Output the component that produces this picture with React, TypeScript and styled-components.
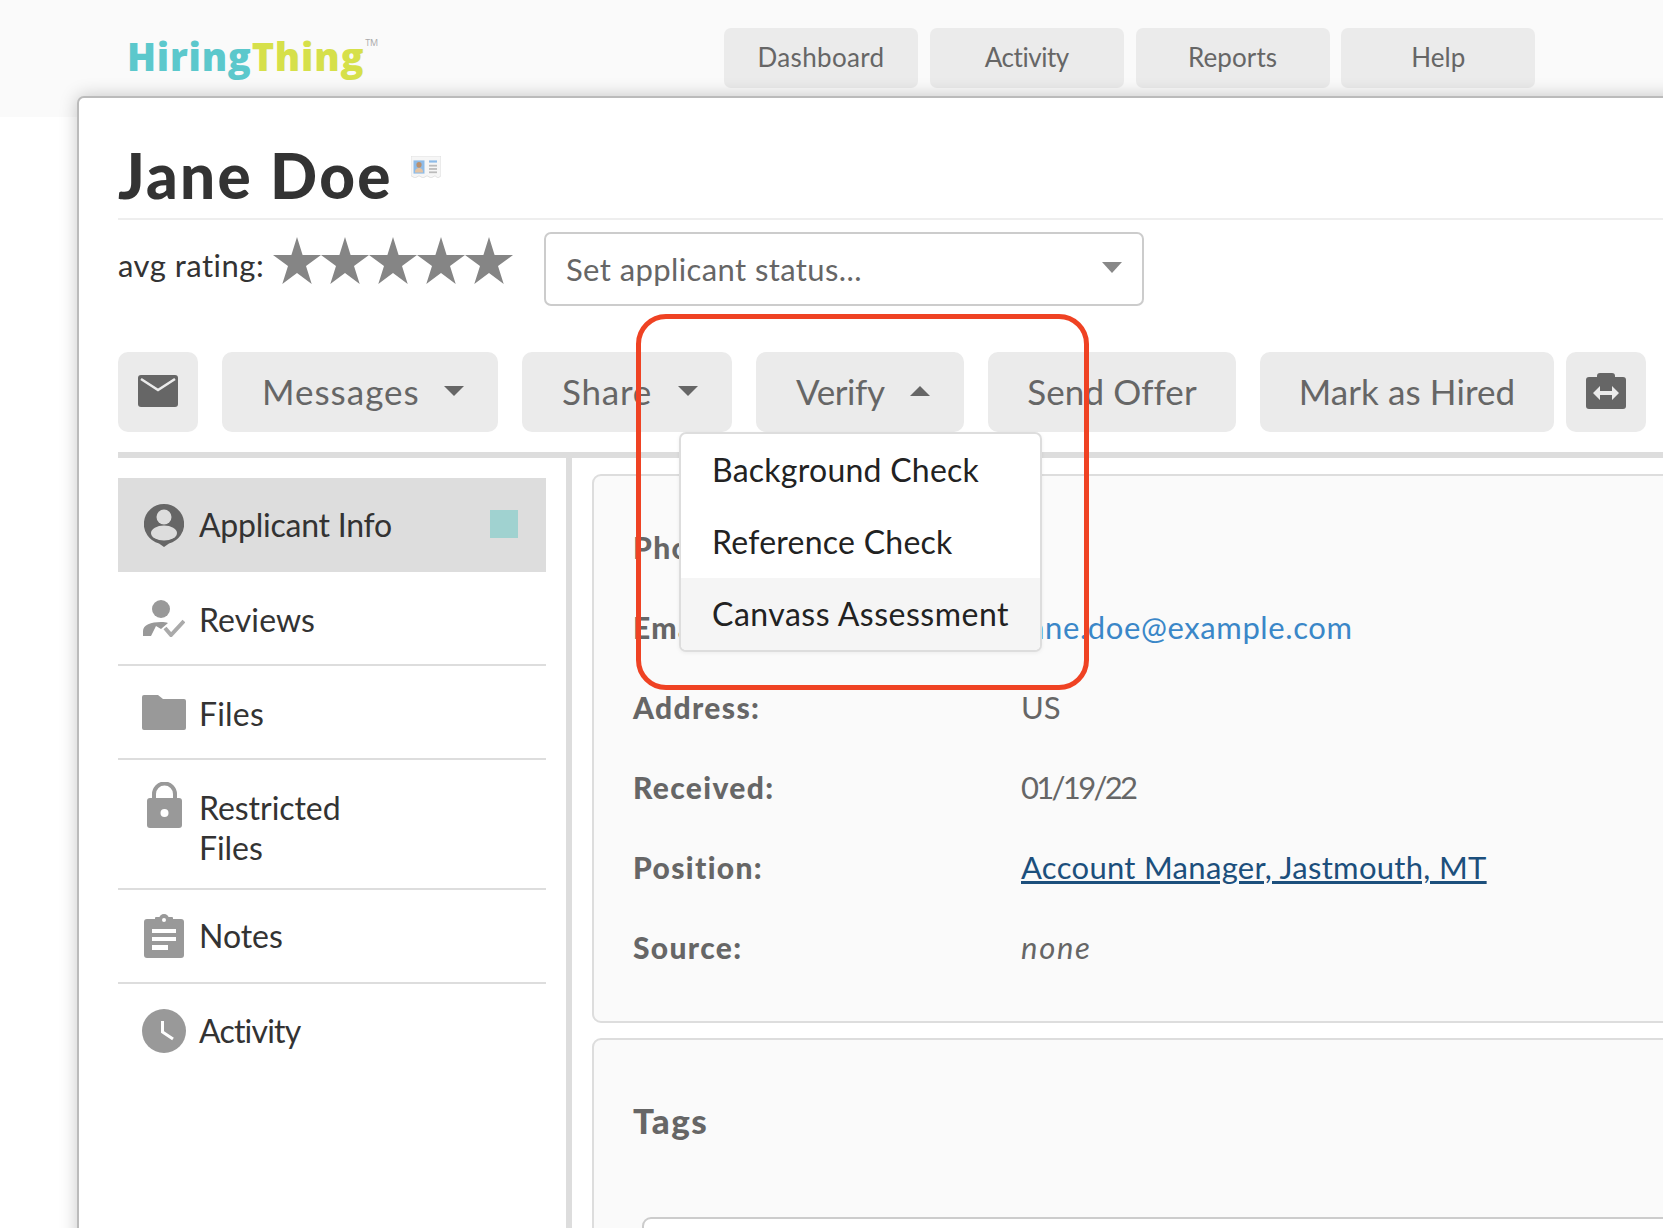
import React from "react";
import styled, { createGlobalStyle } from "styled-components";

const Global = createGlobalStyle`
  html, body { margin: 0; padding: 0; background: #fff; }
  * { box-sizing: border-box; }
  body { font-family: "Lato", "Liberation Sans", sans-serif; color: #333; }
`;

const Page = styled.div`
  position: relative;
  width: 1663px;
  height: 1228px;
  overflow: hidden;
  background: #fff;
`;

const Header = styled.header`
  display: flex;
  align-items: flex-start;
  height: 117px;
  background: #fafafa;
  padding: 28px 0 0 127px;
`;

const Logo = styled.div`
  display: flex;
  width: 597px;
  height: 60px;
  align-items: flex-start;
  font-family: "Open Sans", "Lato", sans-serif;
  font-size: 38px;
  line-height: 56px;
  font-weight: 800;
  letter-spacing: 0.75px;
`;
const LogoPart = styled.span<{ $c: string }>`
  color: ${(p) => p.$c};
`;
const LogoMark = styled.sup`
  font-size: 9px;
  line-height: 12px;
  font-weight: 400;
  color: #aaa;
  margin: 9px 0 0 1px;
  letter-spacing: 0;
`;

const Nav = styled.nav`
  display: flex;
  gap: 11.8px;
`;
const NavItem = styled.a<{ $track?: number }>`
  display: flex;
  width: 194px;
  height: 60px;
  align-items: center;
  justify-content: center;
  padding-bottom: 2px;
  background: #ebebeb;
  border-radius: 7px;
  color: #666;
  font-size: 26px;
  letter-spacing: ${(p) => p.$track ?? 0.1}px;
`;

const Panel = styled.main`
  position: relative;
  margin: -21px 0 0 77px;
  width: 1700px;
  height: 1200px;
  background: #fff;
  border: 2px solid #bbb;
  border-radius: 7px;
  box-shadow: 0 0 18px rgba(0, 0, 0, 0.22);
  padding: 0 0 0 39px;
`;

const TitleRow = styled.div`
  display: flex;
  align-items: flex-start;
  height: 122px;
  border-bottom: 2px solid #eee;
  padding-top: 41px;
`;
const Title = styled.h1`
  margin: 0;
  font-size: 62px;
  line-height: 72px;
  font-weight: 900;
  color: #333;
  letter-spacing: 2.3px;
`;
const CardIcon = styled.svg`
  width: 30px;
  height: 22px;
  margin: 17px 0 0 18px;
`;

const StatusRow = styled.div`
  display: flex;
  align-items: flex-start;
  padding-top: 12px;
`;
const Rating = styled.div`
  display: flex;
  align-items: flex-start;
  width: 426px;
  padding-top: 5px;
`;
const RatingLabel = styled.span`
  font-size: 31px;
  line-height: 40px;
  color: #333;
  margin-top: 8px;
  width: 155px;
  letter-spacing: 0.5px;
`;
const Stars = styled.div`
  display: flex;
`;
const Star = styled.svg`
  width: 48px;
  height: 47px;
  display: block;
`;
const Select = styled.div`
  display: flex;
  align-items: center;
  justify-content: space-between;
  width: 600px;
  height: 74px;
  border: 2px solid #ccc;
  border-radius: 7px;
  padding: 0 20px 0 20px;
  color: #666;
  font-size: 31px;
  letter-spacing: 0.4px;
`;
const SelectArrow = styled.span`
  width: 0;
  height: 0;
  border-left: 10px solid transparent;
  border-right: 10px solid transparent;
  border-top: 11px solid #888;
  margin-top: -4px;
`;

const Toolbar = styled.div`
  display: flex;
  margin-top: 46px;
  height: 80px;
`;
const ToolWrap = styled.div<{ $gap?: number }>`
  position: relative;
  margin-right: ${(p) => (p.$gap === undefined ? 24 : p.$gap)}px;
`;
const ToolButton = styled.button<{ $w: number; $center?: boolean }>`
  display: flex;
  align-items: center;
  justify-content: ${(p) => (p.$center ? "center" : "flex-start")};
  width: ${(p) => p.$w}px;
  height: 80px;
  padding: 0 0 2px ${(p) => (p.$center ? 0 : 40)}px;
  border: 0;
  border-radius: 10px;
  background: #ebebeb;
  color: #666;
  font-family: inherit;
  font-size: 35px;
`;
const ToolText = styled.span<{ $w?: number; $track?: number }>`
  display: inline-block;
  width: ${(p) => (p.$w ? `${p.$w}px` : "auto")};
  text-align: left;
  white-space: nowrap;
  letter-spacing: ${(p) => p.$track ?? 0}px;
`;
const Caret = styled.span<{ $up?: boolean }>`
  width: 0;
  height: 0;
  margin-left: 26px;
  border-left: 10px solid transparent;
  border-right: 10px solid transparent;
  ${(p) => (p.$up ? "border-bottom: 10px solid #666;" : "border-top: 10px solid #666;")}
`;

const Menu = styled.ul`
  position: absolute;
  z-index: 5;
  left: -77px;
  top: 80px;
  width: 363px;
  height: 220px;
  margin: 0;
  padding: 0;
  list-style: none;
  background: #fff;
  border: 2px solid #ddd;
  border-radius: 7px;
  box-shadow: 0 1px 4px rgba(0, 0, 0, 0.06);
  overflow: hidden;
`;
const MenuItem = styled.li<{ $active?: boolean; $track?: number }>`
  display: flex;
  align-items: center;
  height: 72px;
  padding: 0 0 2px 31px;
  font-size: 32px;
  color: #222;
  letter-spacing: ${(p) => p.$track ?? 0.25}px;
  background: ${(p) => (p.$active ? "#f5f5f5" : "transparent")};
`;

const Rule = styled.div`
  height: 6px;
  margin-top: 20px;
  background: #ddd;
`;

const Columns = styled.div`
  display: flex;
`;
const Sidebar = styled.aside`
  width: 454px;
  height: 780px;
  padding: 20px 20px 0 0;
  border-right: 6px solid #ddd;
`;
const SideItem = styled.div<{ $active?: boolean; $tall?: boolean; $last?: boolean }>`
  display: flex;
  align-items: ${(p) => (p.$tall ? "flex-start" : "center")};
  position: relative;
  height: ${(p) => (p.$tall ? 130 : 94)}px;
  padding: ${(p) => (p.$tall ? "22px" : "0")} 0 0 0;
  background: ${(p) => (p.$active ? "#ddd" : "transparent")};
  border-bottom: ${(p) => (p.$active || p.$last ? "0" : "2px solid #ddd")};
`;
const SideIcon = styled.div`
  display: flex;
  align-items: center;
  justify-content: center;
  width: 81px;
  padding-left: 11px;
  flex: none;
`;
const SideLabel = styled.span<{ $drop?: number; $track?: number }>`
  font-size: 32px;
  line-height: 40px;
  color: #333;
  margin-top: ${(p) => p.$drop ?? 0}px;
  letter-spacing: ${(p) => p.$track ?? -0.05}px;
`;
const Flag = styled.span`
  position: absolute;
  right: 28px;
  top: 32px;
  width: 28px;
  height: 28px;
  background: #a0d2d0;
`;

const Content = styled.section`
  padding: 16px 0 0 20px;
  flex: 1;
`;
const Card = styled.div`
  background: #fafafa;
  border: 2px solid #ddd;
  border-radius: 9px;
`;
const InfoCard = styled(Card)`
  height: 549px;
  padding: 31px 0 0 39px;
`;
const Row = styled.div`
  display: flex;
  height: 80px;
  align-items: center;
`;
const Label = styled.span`
  width: 388px;
  flex: none;
  font-size: 30px;
  font-weight: 900;
  color: #666;
  letter-spacing: 1.35px;
`;
const Value = styled.span<{ $italic?: boolean; $track?: number }>`
  font-size: 31px;
  color: #666;
  font-style: ${(p) => (p.$italic ? "italic" : "normal")};
  letter-spacing: ${(p) => p.$track ?? 0}px;
`;
const Mail = styled.a`
  font-size: 31px;
  color: #3a87c8;
  letter-spacing: 0.6px;
`;
const JobLink = styled.a`
  font-size: 31px;
  color: #1c4f7c;
  letter-spacing: 0.3px;
  text-decoration: underline;
`;
const TagsCard = styled(Card)`
  margin-top: 15px;
  height: 300px;
  padding: 60px 0 0 39px;
`;
const TagsTitle = styled.h2`
  margin: 0;
  font-size: 35px;
  line-height: 40px;
  font-weight: 900;
  color: #666;
  letter-spacing: 1.5px;
`;
const TagsInput = styled.div`
  margin: 77px 0 0 9px;
  height: 120px;
  background: #fff;
  border: 2px solid #ccc;
  border-radius: 9px;
`;

const Callout = styled.div`
  position: absolute;
  z-index: 10;
  left: 636px;
  top: 314px;
  width: 453px;
  height: 376px;
  border: 5.5px solid #ef4223;
  border-radius: 30px;
  pointer-events: none;
`;

const StarShape = () => (
  <Star viewBox="0 0 48 47">
    <polygon
      fill="#858585"
      points="24,0 29.6,18.1 48,18.1 33,28.9 38.7,47 24,36 9.3,47 15,28.9 0,18.1 18.4,18.1"
    />
  </Star>
);

export default function App() {
  return (
    <Page>
      <Global />
      <Header>
        <Logo>
          <LogoPart $c="#5cc8cc">Hiring</LogoPart>
          <LogoPart $c="#d6e04a">Thing</LogoPart>
          <LogoMark>TM</LogoMark>
        </Logo>
        <Nav>
          <NavItem $track={0.35}>Dashboard</NavItem>
          <NavItem $track={-0.45}>Activity</NavItem>
          <NavItem>Reports</NavItem>
          <NavItem>Help</NavItem>
        </Nav>
      </Header>
      <Panel>
        <TitleRow>
          <Title>Jane Doe</Title>
          <CardIcon viewBox="0 0 30 20" preserveAspectRatio="none">
            <path d="M0 0H30V18L27 20L24 18L20 20L16 18L12 20L8 18L4 20L0 18Z" fill="#f6f6f6" stroke="#ddd" strokeWidth="0.8" />
            <rect x="2.5" y="4" width="11" height="12" fill="#8dbbe8" />
            <circle cx="8" cy="8" r="2.6" fill="#b9906e" />
            <path d="M4 15c0-3 2-4 4-4s4 1 4 4z" fill="#e3c3a3" />
            <rect x="18" y="4" width="8" height="2" fill="#8dbbe8" />
            <rect x="18" y="8" width="8" height="1.6" fill="#bbb" />
            <rect x="18" y="11" width="8" height="1.6" fill="#bbb" />
            <rect x="18" y="14" width="8" height="1.6" fill="#bbb" />
          </CardIcon>
        </TitleRow>
        <StatusRow>
          <Rating>
            <RatingLabel>avg rating:</RatingLabel>
            <Stars>
              <StarShape />
              <StarShape />
              <StarShape />
              <StarShape />
              <StarShape />
            </Stars>
          </Rating>
          <Select>
            <span>Set applicant status...</span>
            <SelectArrow />
          </Select>
        </StatusRow>
        <Toolbar>
          <ToolWrap>
            <ToolButton $w={80} $center>
              <svg width="40" height="32" viewBox="0 0 40 32">
                <rect width="40" height="32" rx="3" fill="#666" />
                <path d="M3 4L20 15L37 4" fill="none" stroke="#ebebeb" strokeWidth="2.6" />
              </svg>
            </ToolButton>
          </ToolWrap>
          <ToolWrap>
            <ToolButton $w={276}>
              <ToolText $w={156} $track={1}>Messages</ToolText>
              <Caret />
            </ToolButton>
          </ToolWrap>
          <ToolWrap>
            <ToolButton $w={210}>
              <ToolText $w={90} $track={0.8}>Share</ToolText>
              <Caret />
            </ToolButton>
          </ToolWrap>
          <ToolWrap>
            <ToolButton $w={208}>
              <ToolText $w={88} $track={-0.4}>Verify</ToolText>
              <Caret $up />
            </ToolButton>
            <Menu>
              <MenuItem>Background Check</MenuItem>
              <MenuItem>Reference Check</MenuItem>
              <MenuItem $active $track={0.5}>Canvass Assessment</MenuItem>
            </Menu>
          </ToolWrap>
          <ToolWrap>
            <ToolButton $w={248} $center>
              <ToolText $track={0.1}>Send Offer</ToolText>
            </ToolButton>
          </ToolWrap>
          <ToolWrap $gap={12}>
            <ToolButton $w={294} $center>
              <ToolText $track={0.1}>Mark as Hired</ToolText>
            </ToolButton>
          </ToolWrap>
          <ToolWrap>
            <ToolButton $w={80} $center>
              <svg width="40" height="36" viewBox="0 0 40 36">
                <rect y="4" width="40" height="32" rx="3" fill="#666" />
                <rect x="11" width="18" height="9" rx="3" fill="#666" />
                <path d="M7 20l7-7v5h12v-5l7 7-7 7v-5H14v5z" fill="#ebebeb" />
              </svg>
            </ToolButton>
          </ToolWrap>
        </Toolbar>
        <Rule />
        <Columns>
          <Sidebar>
            <SideItem $active>
              <SideIcon>
                <svg width="40" height="43" viewBox="0 0 40 43">
                  <path d="M20 0a20 20 0 0 1 5 39.4L20 43l-5-3.600A20 20 0 0 1 20 0z" fill="#666" />
                  <circle cx="20" cy="13" r="7.500" fill="#ddd" />
                  <ellipse cx="20" cy="29" rx="13" ry="7.500" fill="#ddd" />
                </svg>
              </SideIcon>
              <SideLabel $track={-0.25}>Applicant Info</SideLabel>
              <Flag />
            </SideItem>
            <SideItem>
              <SideIcon>
                <svg width="42" height="37" viewBox="0 0 42 37">
                  <circle cx="18" cy="9" r="9" fill="#999" />
                  <path d="M0 36V31C0 25 8 22 18 22C21 22 23 22 25 23L18 29L13 26L8 36Z" fill="#999" />
                  <path d="M22 28L28 35L41 21" fill="none" stroke="#aaa" strokeWidth="4" />
                </svg>
              </SideIcon>
              <SideLabel $drop={4} $track={0.1}>Reviews</SideLabel>
            </SideItem>
            <SideItem>
              <SideIcon>
                <svg width="44" height="35" viewBox="0 0 44 35">
                  <path d="M2 0H16L21 4H42a2 2 0 0 1 2 2V33a2 2 0 0 1-2 2H2a2 2 0 0 1-2-2V2a2 2 0 0 1 2-2z" fill="#999" />
                </svg>
              </SideIcon>
              <SideLabel $drop={4} $track={0.2}>Files</SideLabel>
            </SideItem>
            <SideItem $tall>
              <SideIcon>
                <svg width="35" height="46" viewBox="0 0 35 46">
                  <path d="M7 19V12a10.500 10.500 0 0 1 21 0V19" fill="none" stroke="#999" strokeWidth="4" />
                  <rect y="16" width="35" height="30" rx="3" fill="#999" />
                  <circle cx="17.500" cy="31" r="4" fill="#fff" />
                </svg>
              </SideIcon>
              <SideLabel $drop={6}>
                Restricted
                <br />
                Files
              </SideLabel>
            </SideItem>
            <SideItem>
              <SideIcon>
                <svg width="40" height="44" viewBox="0 0 40 44">
                  <rect y="5" width="40" height="39" rx="3" fill="#999" />
                  <circle cx="20" cy="5" r="5" fill="#999" />
                  <rect x="11" y="3" width="18" height="8" rx="1" fill="#999" />
                  <circle cx="20" cy="6" r="2" fill="#fff" />
                  <rect x="8" y="15" width="24" height="4" fill="#fff" />
                  <rect x="8" y="23" width="24" height="4" fill="#fff" />
                  <rect x="8" y="31" width="16" height="5" fill="#fff" />
                </svg>
              </SideIcon>
              <SideLabel>Notes</SideLabel>
            </SideItem>
            <SideItem $last>
              <SideIcon>
                <svg width="44" height="44" viewBox="0 0 44 44">
                  <circle cx="22" cy="22" r="22" fill="#999" />
                  <path d="M20.500 12V23L31 30" fill="none" stroke="#fff" strokeWidth="3" />
                </svg>
              </SideIcon>
              <SideLabel $track={-0.8}>Activity</SideLabel>
            </SideItem>
          </Sidebar>
          <Content>
            <InfoCard>
              <Row>
                <Label>Phone:</Label>
              </Row>
              <Row>
                <Label>Email:</Label>
                <Mail>jane.doe@example.com</Mail>
              </Row>
              <Row>
                <Label>Address:</Label>
                <Value>US</Value>
              </Row>
              <Row>
                <Label>Received:</Label>
                <Value $track={-2.7}>01/19/22</Value>
              </Row>
              <Row>
                <Label>Position:</Label>
                <JobLink>Account Manager, Jastmouth, MT</JobLink>
              </Row>
              <Row>
                <Label>Source:</Label>
                <Value $italic $track={1.7}>none</Value>
              </Row>
            </InfoCard>
            <TagsCard>
              <TagsTitle>Tags</TagsTitle>
              <TagsInput />
            </TagsCard>
          </Content>
        </Columns>
      </Panel>
      <Callout />
    </Page>
  );
}
